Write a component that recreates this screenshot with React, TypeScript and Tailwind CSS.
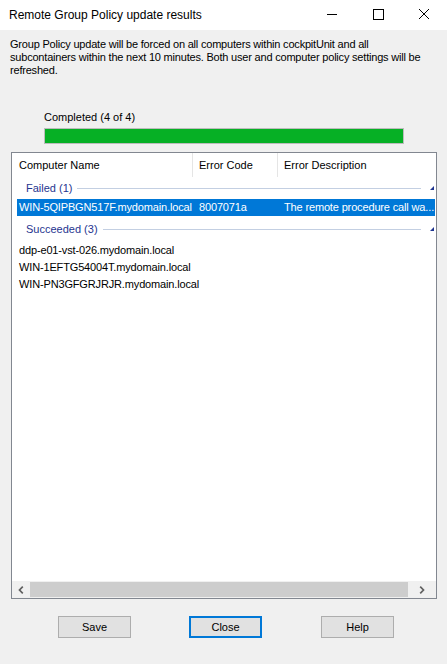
import React from 'react';

const sans = { fontFamily: '"Liberation Sans", Arial, sans-serif' };

interface Row {
  name: string;
  code?: string;
  desc?: string;
  selected?: boolean;
}

const failed: Row[] = [
  {
    name: 'WIN-5QIPBGN517F.mydomain.local',
    code: '8007071a',
    desc: 'The remote procedure call wa...',
    selected: true,
  },
];

const succeeded: Row[] = [
  { name: 'ddp-e01-vst-026.mydomain.local' },
  { name: 'WIN-1EFTG54004T.mydomain.local' },
  { name: 'WIN-PN3GFGRJRJR.mydomain.local' },
];

function GroupHeader({ title }: { title: string }) {
  return (
    <div className="flex h-[22px] items-center pl-[14px] pr-px">
      <span className="text-[#1f3590]">{title}</span>
      <div className="ml-[5px] h-px flex-1 bg-[#c3cfe2]" />
      <svg width="4" height="4" viewBox="0 0 4 4" className="ml-[9px] mr-px">
        <polygon points="4,0 4,4 0,4" fill="#1f3590" />
      </svg>
    </div>
  );
}

function ItemRow({ row }: { row: Row }) {
  return (
    <div
      className={`ml-[5px] mr-px flex h-[17px] items-center whitespace-nowrap tracking-[-0.15px] ${
        row.selected ? 'bg-[#0078d7] text-white' : 'text-black'
      }`}
    >
      <span className="w-[182px] pl-[2px]">{row.name}</span>
      <span className="w-[85px]">{row.code}</span>
      <span>{row.desc}</span>
    </div>
  );
}

function Button({ label, focused }: { label: string; focused?: boolean }) {
  return (
    <button
      className={`h-[22px] w-[73px] bg-[#e1e1e1] text-[11px] text-black ${
        focused ? 'border-2 border-[#0078d7]' : 'border border-[#adadad]'
      }`}
      style={sans}
    >
      {label}
    </button>
  );
}

export default function App() {
  return (
    <div className="h-[664px] w-[447px] overflow-hidden bg-[#f0f0f0] text-[11px] leading-[13px]" style={sans}>
      <div className="flex h-[30px] items-center bg-white">
        <span className="ml-[9px] flex-1 text-[12px] text-black">Remote Group Policy update results</span>
        <div className="flex items-center">
          <svg width="46" height="30" viewBox="0 0 46 30">
            <line x1="18" y1="14.5" x2="28" y2="14.5" stroke="#000" strokeWidth="1" />
          </svg>
          <svg width="46" height="30" viewBox="0 0 46 30">
            <rect x="18.5" y="9.5" width="10" height="10" fill="none" stroke="#000" strokeWidth="1" />
          </svg>
          <svg width="46" height="30" viewBox="0 0 46 30">
            <path d="M18 9 L28 19 M28 9 L18 19" stroke="#000" strokeWidth="1" />
          </svg>
        </div>
      </div>

      <p className="ml-[10px] mr-[12px] mt-[8px] tracking-[-0.2px] text-black">
        Group Policy update will be forced on all computers within cockpitUnit and all subcontainers within the next
        10 minutes. Both user and computer policy settings will be refreshed.
      </p>

      <div className="ml-[44px] mt-[34px] w-[360px]">
        <div className="text-black">Completed (4 of 4)</div>
        <div className="mt-[4px] h-[16px] border border-[#bcbcbc] bg-[#06b025]" />
      </div>

      <div className="ml-[11px] mt-[8px] flex h-[447px] w-[426px] flex-col border border-[#828790] bg-white">
        <div className="flex h-[24px] items-center text-black">
          <div className="flex h-full w-[181px] items-center border-r border-[#e5e5e5] pl-[7px]">Computer Name</div>
          <div className="flex h-full w-[85px] items-center border-r border-[#e5e5e5] pl-[6px]">Error Code</div>
          <div className="pl-[6px]">Error Description</div>
        </div>
        <div className="flex-1">
          <GroupHeader title="Failed (1)" />
          {failed.map((r) => (
            <ItemRow key={r.name} row={r} />
          ))}
          <div className="h-[2px]" />
          <GroupHeader title="Succeeded (3)" />
          <div className="h-[2px]" />
          {succeeded.map((r) => (
            <ItemRow key={r.name} row={r} />
          ))}
        </div>
        <div className="flex h-[17px] items-center bg-[#f0f0f0]">
          <div className="flex w-[18px] justify-center">
            <svg width="6" height="8" viewBox="0 0 6 8">
              <path d="M4.8 0.7 L1.5 4 L4.8 7.3" fill="none" stroke="#606060" strokeWidth="1.7" />
            </svg>
          </div>
          <div className="h-[15px] flex-1 bg-[#cdcdcd]" />
          <div className="flex w-[28px] justify-center">
            <svg width="6" height="8" viewBox="0 0 6 8">
              <path d="M1.2 0.7 L4.5 4 L1.2 7.3" fill="none" stroke="#606060" strokeWidth="1.7" />
            </svg>
          </div>
        </div>
      </div>

      <div className="mt-[17px] flex">
        <div className="ml-[58px]">
          <Button label="Save" />
        </div>
        <div className="ml-[58px]">
          <Button label="Close" focused />
        </div>
        <div className="ml-[59px]">
          <Button label="Help" />
        </div>
      </div>
    </div>
  );
}
